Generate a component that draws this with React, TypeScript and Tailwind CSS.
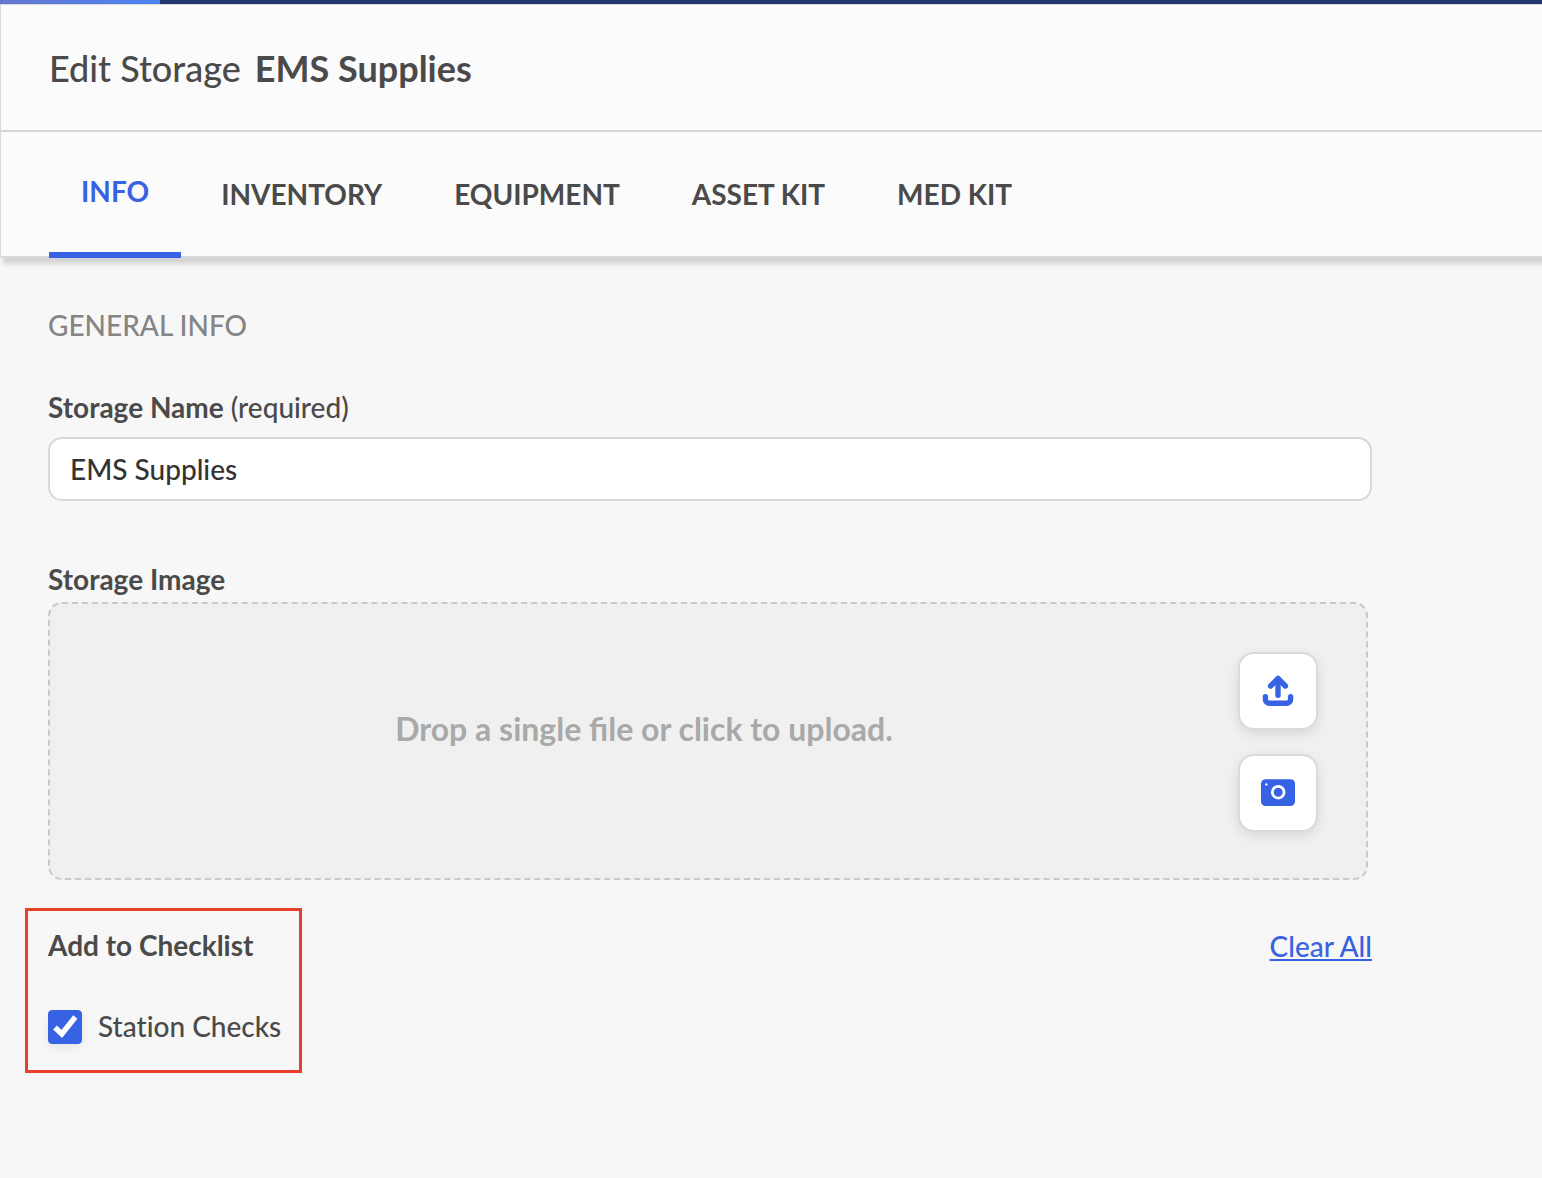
import { useState } from 'react'

const tabs = ['INFO', 'INVENTORY', 'EQUIPMENT', 'ASSET KIT', 'MED KIT']

function UploadIcon() {
  return (
    <svg width="32" height="32" viewBox="0 0 32 32" fill="none" stroke="#3662e3" strokeWidth="5.4" strokeLinecap="round" strokeLinejoin="round" aria-hidden="true">
      <path d="M16 20.3V5" />
      <path d="M8.6 11L16 3.4l7.4 7.6" />
      <path d="M3.4 21.6v2.6a4 4 0 0 0 4 4h17.2a4 4 0 0 0 4-4v-2.6" />
    </svg>
  )
}

function CameraIcon() {
  return (
    <svg width="34" height="28" viewBox="0 0 34 28" aria-hidden="true">
      <rect x="0" y="0.3" width="34" height="26.7" rx="4.5" fill="#3662e3" />
      <circle cx="17.2" cy="13.2" r="5.9" fill="none" stroke="#fff" strokeWidth="2.8" />
      <circle cx="5.4" cy="5.4" r="1.2" fill="#fff" />
    </svg>
  )
}

export default function App() {
  const [active, setActive] = useState('INFO')
  const [name, setName] = useState('EMS Supplies')
  const [stationChecks, setStationChecks] = useState(true)

  const iconButton = 'flex h-[78px] w-20 items-center justify-center rounded-2xl border-2 border-[#dadada] bg-white shadow-[0_4px_12px_rgba(0,0,0,0.1)]'

  return (
    <div className="min-h-screen bg-[#f7f7f7] font-['Lato',sans-serif] text-[28px] leading-[34px] font-medium text-[#4a4a4a]">
      <div className="h-1 bg-[#21366b]">
        <div className="h-1 w-40 bg-linear-to-r from-[#6577d0] to-[#4a83f2]" />
      </div>

      <div className="border-t border-l border-[#d9d9d9] bg-[#fbfbfb] shadow-[3px_6px_4px_#d4d4d4]">
        <header className="border-b-2 border-[#d6d6d6] px-12 pt-[41px] pb-10">
          <h1 className="flex gap-3.5 text-[36px] leading-[44px]">
            <span>Edit Storage</span>
            <span className="font-bold">EMS Supplies</span>
          </h1>
        </header>
        <nav className="flex gap-2 px-12 shadow-[inset_0_-2px_0_#d8d8d8]">
          {tabs.map((tab) => (
            <button
              key={tab}
              type="button"
              onClick={() => setActive(tab)}
              className={`h-[126px] px-8 pb-0.5 font-bold ${tab === active ? 'border-b-[6px] border-[#3662e3] text-[#3662e3]' : ''}`}
            >
              {tab}
            </button>
          ))}
        </nav>
      </div>

      <main className="pt-[50px] pr-[170px] pb-12 pl-12">
        <h2 className="text-[#858585]">GENERAL INFO</h2>

        <div className="mt-12">
          <label htmlFor="storage-name" className="block">
            <span className="font-bold">Storage Name</span> (required)
          </label>
          <input
            id="storage-name"
            type="text"
            value={name}
            onChange={(e) => setName(e.target.value)}
            className="mt-[13px] h-16 w-full rounded-[14px] border-2 border-[#d9d9d9] bg-white px-5 text-[#333]"
          />
        </div>

        <div className="mt-[61px]">
          <h3 className="font-bold">Storage Image</h3>
          <div className="mt-1.5 mr-1 flex items-stretch rounded-[14px] border-2 border-dashed border-[#c9c9c9] bg-[#f0f0f0] pt-12 pr-12 pb-[46px]">
            <label htmlFor="storage-image" className="flex flex-1 cursor-pointer items-center justify-center pb-[26px] text-[32px] leading-10 font-bold text-[#a9a9a9]">
              Drop a single file or click to upload.
            </label>
            <input id="storage-image" type="file" className="sr-only" />
            <div className="flex flex-col gap-6">
              <button type="button" aria-label="Upload file" className={iconButton}>
                <UploadIcon />
              </button>
              <button type="button" aria-label="Take photo" className={iconButton}>
                <CameraIcon />
              </button>
            </div>
          </div>
        </div>

        <div className="mt-7 flex items-start justify-between">
          <fieldset className="-ml-[23px] border-3 border-[#e8402a] pt-[17px] pr-[18px] pb-[25px] pl-5">
            <h3 className="font-bold">Add to Checklist</h3>
            <label className="mt-[47px] flex items-center gap-4">
              <span className="grid">
                <input
                  type="checkbox"
                  checked={stationChecks}
                  onChange={(e) => setStationChecks(e.target.checked)}
                  className="peer col-start-1 row-start-1 size-[34px] appearance-none rounded-[4px] border border-[#c9c9c9] bg-white shadow-[0_4px_8px_rgba(0,0,0,0.07)] checked:border-[#3662e3] checked:bg-[#3662e3]"
                />
                <svg viewBox="0 0 34 34" className="pointer-events-none invisible col-start-1 row-start-1 size-[34px] peer-checked:visible" fill="none" stroke="#fff" strokeWidth="5.4" aria-hidden="true">
                  <path d="M7 17.5l6.8 6.5L27.3 7" />
                </svg>
              </span>
              <span className="pb-0.5 [font-variant-ligatures:none]">Station Checks</span>
            </label>
          </fieldset>
          <a href="#clear" className="mt-[21px] text-[#3662e3] underline">Clear All</a>
        </div>
      </main>
    </div>
  )
}
